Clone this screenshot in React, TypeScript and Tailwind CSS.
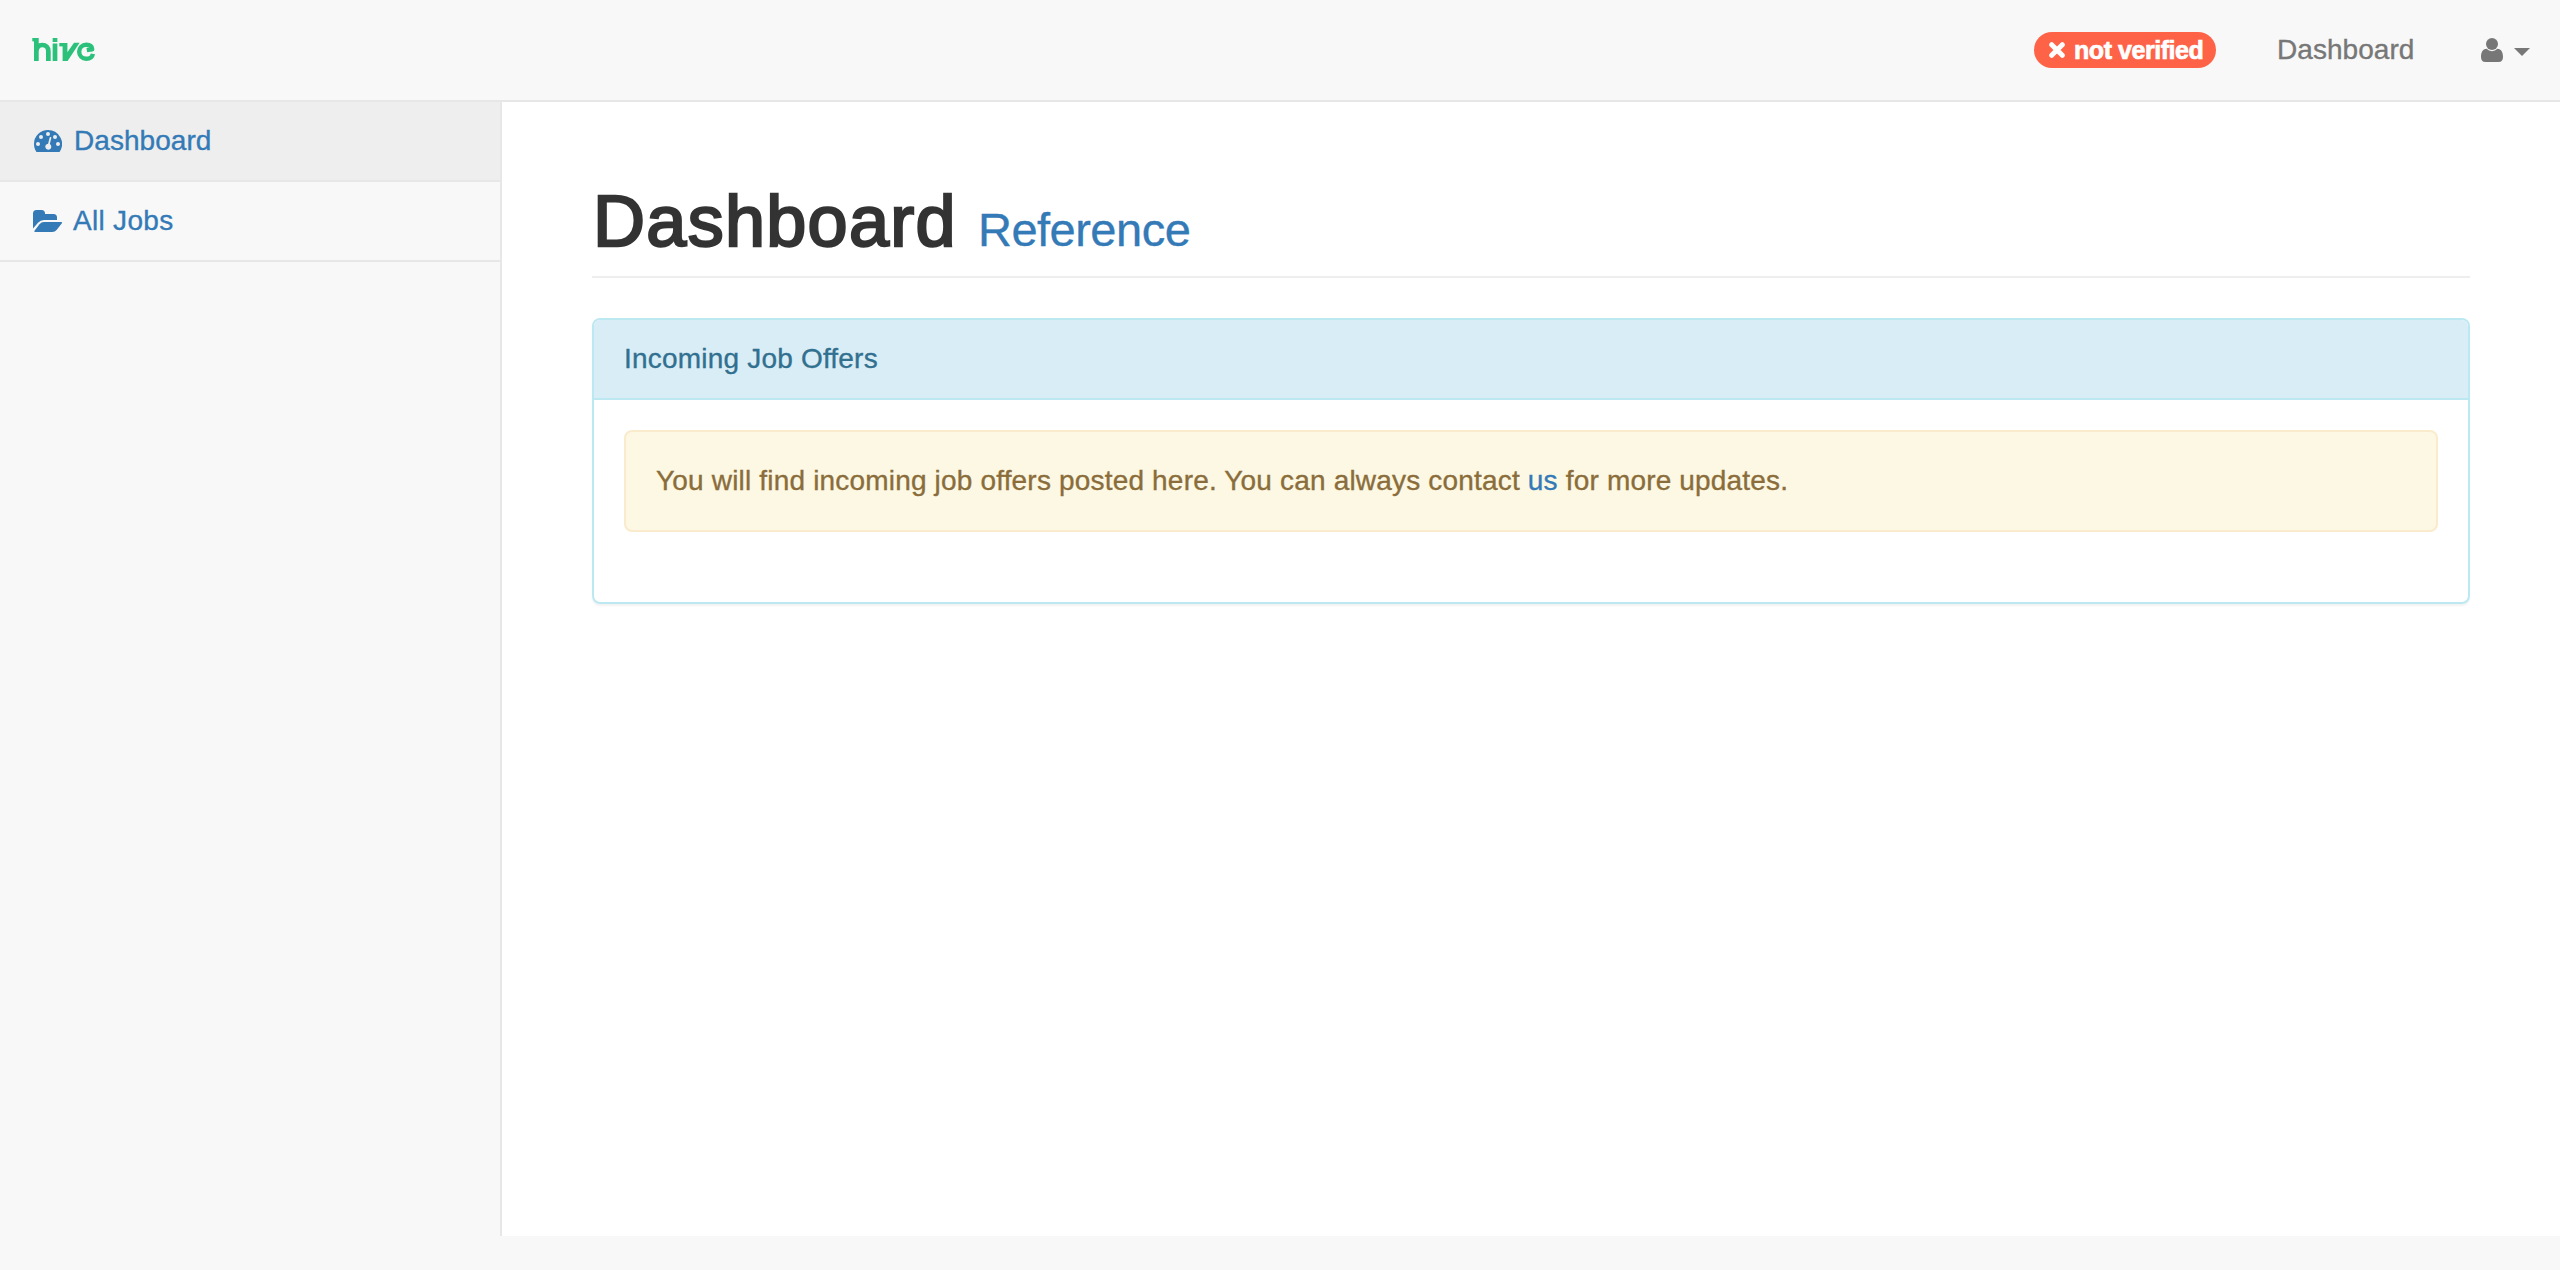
import React from "react";

function Logo() {
  return (
    <svg className="block h-6 w-16" viewBox="0 0 64 24" fill="none" stroke="#2bc17b" strokeWidth="4.7">
      <path d="M.3 1.7H5" strokeWidth="3.4" />
      <path d="M4.35 0V23M4.35 14C4.35 9.2 7 7 10.3 7C14 7 16.35 9.3 16.35 13.2V23" />
      <path d="M23 0V4M23 5.6V23" />
      <path d="M27.3 6.7H33" strokeWidth="3.4" />
      <path fill="#2bc17b" stroke="none" d="M30.6 5H35.4V14.2L42 4.8H47.6L35.6 23H30.6Z" />
      <path d="M60.9 15.8C60.3 18.9 57.7 20.8 54.3 20.8C50.2 20.8 47.2 17.8 47.2 13.8C47.2 9.8 50.2 6.8 54.3 6.8C57.8 6.8 60 8.6 60.2 11.3L54.8 12.2" strokeWidth="4.4" strokeLinejoin="round" />
    </svg>
  );
}

function Gauge() {
  return (
    <svg className="block h-[22px] w-7" viewBox="0 0 28 22">
      <path fill="#337ab7" d="M14 0A14 14 0 0 0 0 14C0 16.7.8 19.2 2.1 21.4Q2.5 22 3.2 22H24.8Q25.5 22 25.9 21.4A14 14 0 0 0 14 0Z" />
      <g fill="#eee">
        <circle cx="4" cy="14" r="2" />
        <circle cx="7" cy="7" r="2" />
        <circle cx="14" cy="4" r="2" />
        <circle cx="21" cy="7" r="2" />
        <circle cx="24" cy="14" r="2" />
        <path d="M15.7 7.6A.8.8 0 0 1 17.3 8L15.8 14.1A3 3 0 1 1 14.1 13.7Z" />
      </g>
    </svg>
  );
}

function FolderOpen() {
  return (
    <svg className="block h-[22px] w-[30px]" viewBox="0 0 30 22" fill="#337ab7">
      <path d="M0 18.5V3.5A3.5 3.5 0 0 1 3.5 0H8.5A3.5 3.5 0 0 1 12 3.5V4H20.5A3.5 3.5 0 0 1 24 7.5V10H11Q7.5 10 5 12.7Z" />
      <path d="M11 12H28.3Q29.8 12 28.7 13.5L23.8 19.8Q22 22 19.2 22H2.2Q.5 22 1.7 20.4L6.5 14.2Q8.3 12 11 12Z" />
    </svg>
  );
}

function Cross() {
  return (
    <svg className="block h-4 w-4" viewBox="0 0 16 16" stroke="#fff" strokeWidth="5" strokeLinecap="round">
      <path d="M2.7 2.7L13.3 13.3M13.3 2.7L2.7 13.3" />
    </svg>
  );
}

function Person() {
  return (
    <svg className="block h-6 w-[22px]" viewBox="0 0 22 24" fill="#777">
      <circle cx="11" cy="6" r="6" />
      <path d="M5.6 10.8Q7.8 13.2 11 13.2T16.4 10.8C20.5 11 22 14.5 22 19Q22 24 17.5 24H4.5Q0 24 0 19C0 14.5 1.5 11 5.6 10.8Z" />
    </svg>
  );
}

export default function App() {
  return (
    <div className="flex h-[1270px] w-[2560px] flex-col overflow-hidden bg-[#f8f8f8] font-['Liberation_Sans',Arial,sans-serif] text-[28px] leading-10 text-[#333] [-webkit-text-stroke:0.35px_currentColor]">
      <header className="flex h-[102px] shrink-0 items-start justify-between border-b-2 border-[#e7e7e7]">
        <a className="pt-[38px] pl-8"><Logo /></a>
        <nav className="flex text-[#777]">
          <span className="mt-8 flex h-9 w-[182px] items-center rounded-full bg-[#ff6347] pl-[15px] text-[25px] leading-9 font-bold text-white">
            <Cross />
            <span className="ml-[9px] tracking-[-0.45px] whitespace-nowrap [-webkit-text-stroke:0.7px_#fff]">not verified</span>
          </span>
          <a className="mt-[30px] ml-[61px] w-[137px] tracking-[0.05px]">Dashboard</a>
          <a className="mt-[38px] mr-[30px] ml-[67px] flex w-[49px] justify-between">
            <Person />
            <svg className="mt-[10px] block h-2 w-4" viewBox="0 0 16 8" fill="#777"><path d="M0 0H16L8 8Z" /></svg>
          </a>
        </nav>
      </header>
      <div className="flex h-[1134px]">
        <aside className="w-[502px] shrink-0 border-r-2 border-[#e7e7e7] text-[#337ab7]">
          <a className="flex h-20 items-center border-b-2 border-[#e7e7e7] bg-[#eee] pl-[34px]">
            <Gauge />
            <span className="ml-3 tracking-[0.05px]">Dashboard</span>
          </a>
          <a className="flex h-20 items-center border-b-2 border-[#e7e7e7] pl-[33px]">
            <FolderOpen />
            <span className="ml-[10px] tracking-[0.3px]">All Jobs</span>
          </a>
        </aside>
        <main className="flex-1 bg-white pr-[90px] pl-[90px]">
          <h1 className="mt-20 flex h-24 items-baseline border-b-2 border-[#eee] text-[72px] leading-[79px] whitespace-nowrap">
            <span className="ml-px tracking-[1.3px] [-webkit-text-stroke:2.4px_#333]">Dashboard</span>
            <a className="ml-[21px] text-[47px] tracking-[-0.5px] text-[#337ab7]">Reference</a>
          </h1>
          <section className="mt-10 h-[286px] rounded-lg border-2 border-[#bce8f1] shadow-[0_2px_2px_rgba(0,0,0,0.05)]">
            <h3 className="flex h-20 items-center rounded-t-md border-b-2 border-[#bce8f1] bg-[#d9edf7] pl-[30px] text-[#31708f]">
              <span className="tracking-[0.2px]">Incoming Job Offers</span>
            </h3>
            <div className="px-[30px] pt-[30px]">
              <p className="flex h-[102px] items-center rounded-lg border-2 border-[#faebcc] bg-[#fcf8e3] pl-[30px] text-[#8a6d3b]">
                <span className="tracking-[0.18px]">
                  You will find incoming job offers posted here. You can always contact <a className="text-[#337ab7]">us</a> for more updates.
                </span>
              </p>
            </div>
          </section>
        </main>
      </div>
    </div>
  );
}
